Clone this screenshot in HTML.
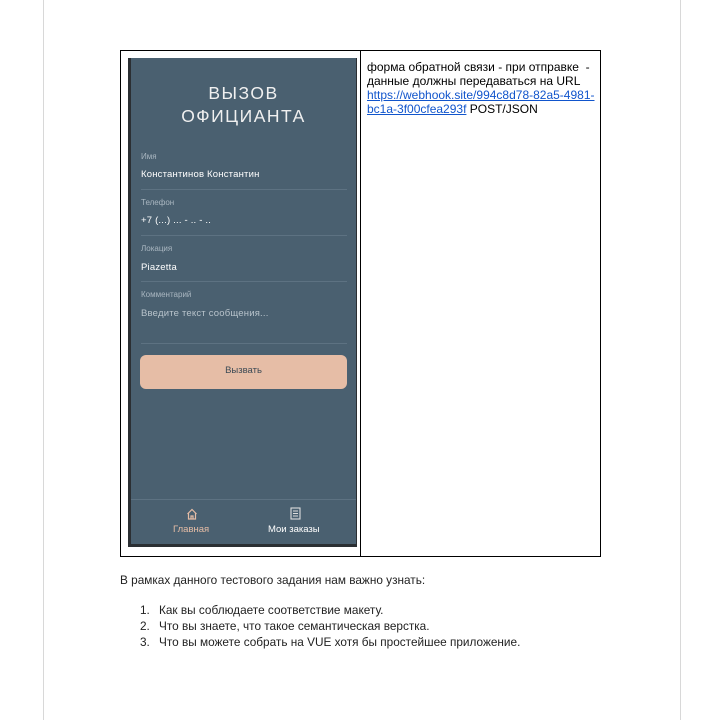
<!DOCTYPE html>
<html><head><meta charset="utf-8"><style>
body{margin:0;width:724px;height:720px;background:#fff;position:relative;overflow:hidden;font-family:"Liberation Sans",Arial,sans-serif;}
.vl{position:absolute;top:0;width:1px;height:720px;background:#d8d8d8}
.tbl{position:absolute;left:120px;top:50px;width:479px;height:505px;border:1px solid #000}
.div{position:absolute;left:360px;top:50px;width:1px;height:507px;background:#000}
.ph{position:absolute;left:128px;top:58px;width:229px;height:489px;background:#4a6070;border-left:3px solid #2b2f33;border-bottom:3px solid #2b2f33;border-right:1px solid #2b2f33;box-sizing:border-box;color:#fff}
.t{position:absolute;white-space:nowrap}
.ttl{left:0;width:100%;text-align:center;font-size:17.5px;letter-spacing:1.5px;color:#f0f0f0}
.lab{left:10px;font-size:8px;color:#a9b6c0}
.val{left:10px;font-size:9.5px;letter-spacing:0.2px;color:#fff}
.ln{position:absolute;left:10px;width:206px;height:1px;background:#5d7282}
.btn{position:absolute;left:9px;top:297px;width:207px;height:34px;background:#e6bda6;border-radius:6px;color:#3c4a55;font-size:9.5px;text-align:center;line-height:32px}
.nav{position:absolute;left:0;top:441px;width:100%;height:1px;background:#5d7282}
.rt{position:absolute;left:367px;top:60px;font-size:12px;line-height:14px;color:#000;width:230px}
.rt a{color:#1155cc}
.p{position:absolute;font-size:11.8px;color:#222}
</style></head><body>
<div class="vl" style="left:43px"></div><div class="vl" style="left:680px"></div>
<div class="tbl"></div><div class="div"></div>
<div class="ph">
<div class="t ttl" style="top:25px">ВЫЗОВ</div>
<div class="t ttl" style="top:48px">ОФИЦИАНТА</div>
<div class="t lab" style="top:94px">Имя</div>
<div class="t val" style="top:111px">Константинов Константин</div>
<div class="ln" style="top:131px"></div>
<div class="t lab" style="top:140px">Телефон</div>
<div class="t val" style="top:157px">+7 (...) ... - .. - ..</div>
<div class="ln" style="top:177px"></div>
<div class="t lab" style="top:186px">Локация</div>
<div class="t val" style="top:204px">Piazetta</div>
<div class="ln" style="top:223px"></div>
<div class="t lab" style="top:232px">Комментарий</div>
<div class="t val" style="top:250px;color:#b8c3cb">Введите текст сообщения...</div>
<div class="ln" style="top:285px"></div>
<div class="btn">Вызвать</div>
<div class="nav"></div>
<svg style="position:absolute;left:55px;top:450px" width="12" height="12" viewBox="0 0 12 12" fill="none" stroke="#e6bda6" stroke-width="1.2"><path d="M1.5 6L6 1.5 10.5 6M2.5 5v6h7V5M5 11V8h2v3"/></svg>
<div class="t" style="left:42px;top:466px;font-size:9.5px;color:#e6bda6">Главная</div>
<svg style="position:absolute;left:159px;top:449px" width="11" height="13" viewBox="0 0 11 13" fill="none" stroke="#ddd" stroke-width="1.1"><rect x="1" y="1" width="9" height="11"/><path d="M3 4h5M3 6.5h5M3 9h5"/></svg>
<div class="t" style="left:137px;top:466px;font-size:9.5px;color:#fff">Мои заказы</div>
</div>
<div class="rt">форма обратной связи - при отправке&nbsp; - данные должны передаваться на URL <a href="#">https://webhook.site/994c8d78-82a5-4981-bc1a-3f00cfea293f</a> POST/JSON</div>
<div class="p" style="left:120px;top:573px">В рамках данного тестового задания нам важно узнать:</div>
<div class="p" style="left:140px;top:603px">1.</div><div class="p" style="left:159px;top:603px">Как вы соблюдаете соответствие макету.</div>
<div class="p" style="left:140px;top:619px">2.</div><div class="p" style="left:159px;top:619px">Что вы знаете, что такое семантическая верстка.</div>
<div class="p" style="left:140px;top:635px">3.</div><div class="p" style="left:159px;top:635px">Что вы можете собрать на VUE хотя бы простейшее приложение.</div>
</body></html>
